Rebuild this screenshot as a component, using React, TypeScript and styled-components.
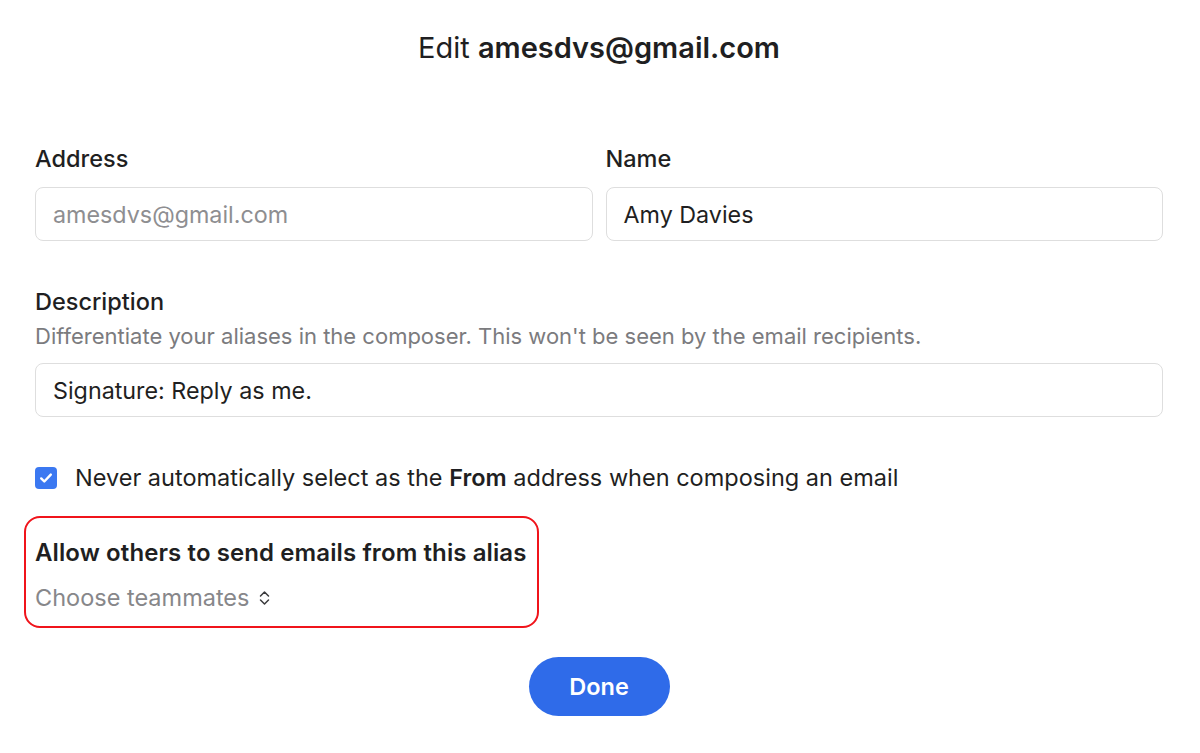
import { FC } from "react";
import styled, { createGlobalStyle } from "styled-components";

const GlobalStyle = createGlobalStyle`
  html, body {
    margin: 0;
    padding: 0;
    background: #ffffff;
  }
  body {
    font-family: Inter, "Noto Sans", "Liberation Sans", sans-serif;
    color: #1f1f22;
    -webkit-font-smoothing: antialiased;
  }
`;

// styled components
const Dialog = styled.div`
  width: 1200px;
  height: 753px;
  box-sizing: border-box;
  padding: 30px 37px 0 35px;
  display: flex;
  flex-direction: column;
`;

const Title = styled.h1`
  margin: 0;
  font-size: 29px;
  line-height: 36px;
  font-weight: 400;
  text-align: center;
  color: #1f1f22;

  & b {
    font-weight: 600;
  }
`;

const FieldRow = styled.div`
  display: grid;
  grid-template-columns: 1fr 1fr;
  gap: 13px;
  margin-top: 79px;
`;

const Field = styled.div<{ $mt?: number }>`
  display: flex;
  flex-direction: column;
  margin-top: ${(p) => p.$mt ?? 0}px;
`;

const Label = styled.label<{ $mb?: number }>`
  font-size: 23.5px;
  line-height: 28px;
  font-weight: 500;
  color: #1f1f22;
  margin-bottom: ${(p) => p.$mb ?? 14}px;
`;

const Help = styled.div`
  font-size: 22px;
  line-height: 28px;
  color: #7b7b7e;
  margin-bottom: 13px;
`;

const Input = styled.div<{ $muted?: boolean }>`
  height: 54px;
  box-sizing: border-box;
  border: 1.5px solid #dedede;
  border-radius: 8px;
  padding: 0 17px;
  display: flex;
  align-items: center;
  font-size: 23.3px;
  color: ${(p) => (p.$muted ? "#8e8e91" : "#1f1f22")};
`;

const CheckRow = styled.div`
  display: flex;
  align-items: center;
  gap: 18px;
  margin-top: 47px;
  font-size: 23.5px;
  line-height: 28px;
  color: #1f1f22;

  & b {
    font-weight: 600;
  }
`;

const CheckBox = styled.span`
  width: 22px;
  height: 22px;
  border-radius: 4px;
  background: #3b78f1;
  display: flex;
  align-items: center;
  justify-content: center;
  flex-shrink: 0;
`;

const Highlight = styled.section`
  margin: 24px 0 0 -11px;
  width: 515px;
  box-sizing: border-box;
  border: 2.5px solid #f0141b;
  border-radius: 16px;
  padding: 21px 9px 14px 9px;
`;

const SectionTitle = styled.div`
  font-size: 24px;
  line-height: 28px;
  font-weight: 600;
  letter-spacing: 0.1px;
  color: #1f1f22;
`;

const Picker = styled.div`
  margin-top: 17px;
  display: flex;
  align-items: center;
  gap: 9px;
  font-size: 23.5px;
  line-height: 28px;
  color: #87878a;
`;

const Footer = styled.div`
  display: flex;
  justify-content: center;
  margin-top: 29px;
`;

const DoneButton = styled.button`
  width: 141px;
  height: 59px;
  border: none;
  border-radius: 30px;
  background: #2f6be9;
  color: #ffffff;
  font-family: inherit;
  font-size: 23.5px;
  font-weight: 600;
  cursor: pointer;
`;

// =============================================================

const CheckIcon: FC = () => (
  <svg width="16" height="16" viewBox="0 0 16 16" fill="none">
    <path
      d="M3.2 8.4l3.1 3.1L12.8 4.6"
      stroke="#fff"
      strokeWidth="2.4"
      strokeLinecap="round"
      strokeLinejoin="round"
    />
  </svg>
);

const ChevronUpDown: FC = () => (
  <svg width="13" height="18" viewBox="0 0 13 18" fill="none">
    <path
      d="M2.5 7L6.5 3 10.5 7M2.5 11L6.5 15 10.5 11"
      stroke="#3a3a3c"
      strokeWidth="1.5"
      strokeLinecap="round"
      strokeLinejoin="round"
    />
  </svg>
);

const App: FC = () => {
  return (
    <>
      <GlobalStyle />
      <Dialog>
        <Title>
          Edit <b>amesdvs@gmail.com</b>
        </Title>

        <FieldRow>
          <Field>
            <Label>Address</Label>
            <Input $muted>amesdvs@gmail.com</Input>
          </Field>
          <Field>
            <Label>Name</Label>
            <Input>Amy Davies</Input>
          </Field>
        </FieldRow>

        <Field $mt={47}>
          <Label $mb={6}>Description</Label>
          <Help>
            Differentiate your aliases in the composer. This won't be seen by
            the email recipients.
          </Help>
          <Input>Signature: Reply as me.</Input>
        </Field>

        <CheckRow>
          <CheckBox>
            <CheckIcon />
          </CheckBox>
          <span>
            Never automatically select as the <b>From</b> address when
            composing an email
          </span>
        </CheckRow>

        <Highlight>
          <SectionTitle>Allow others to send emails from this alias</SectionTitle>
          <Picker>
            Choose teammates
            <ChevronUpDown />
          </Picker>
        </Highlight>

        <Footer>
          <DoneButton>Done</DoneButton>
        </Footer>
      </Dialog>
    </>
  );
};

export default App;
